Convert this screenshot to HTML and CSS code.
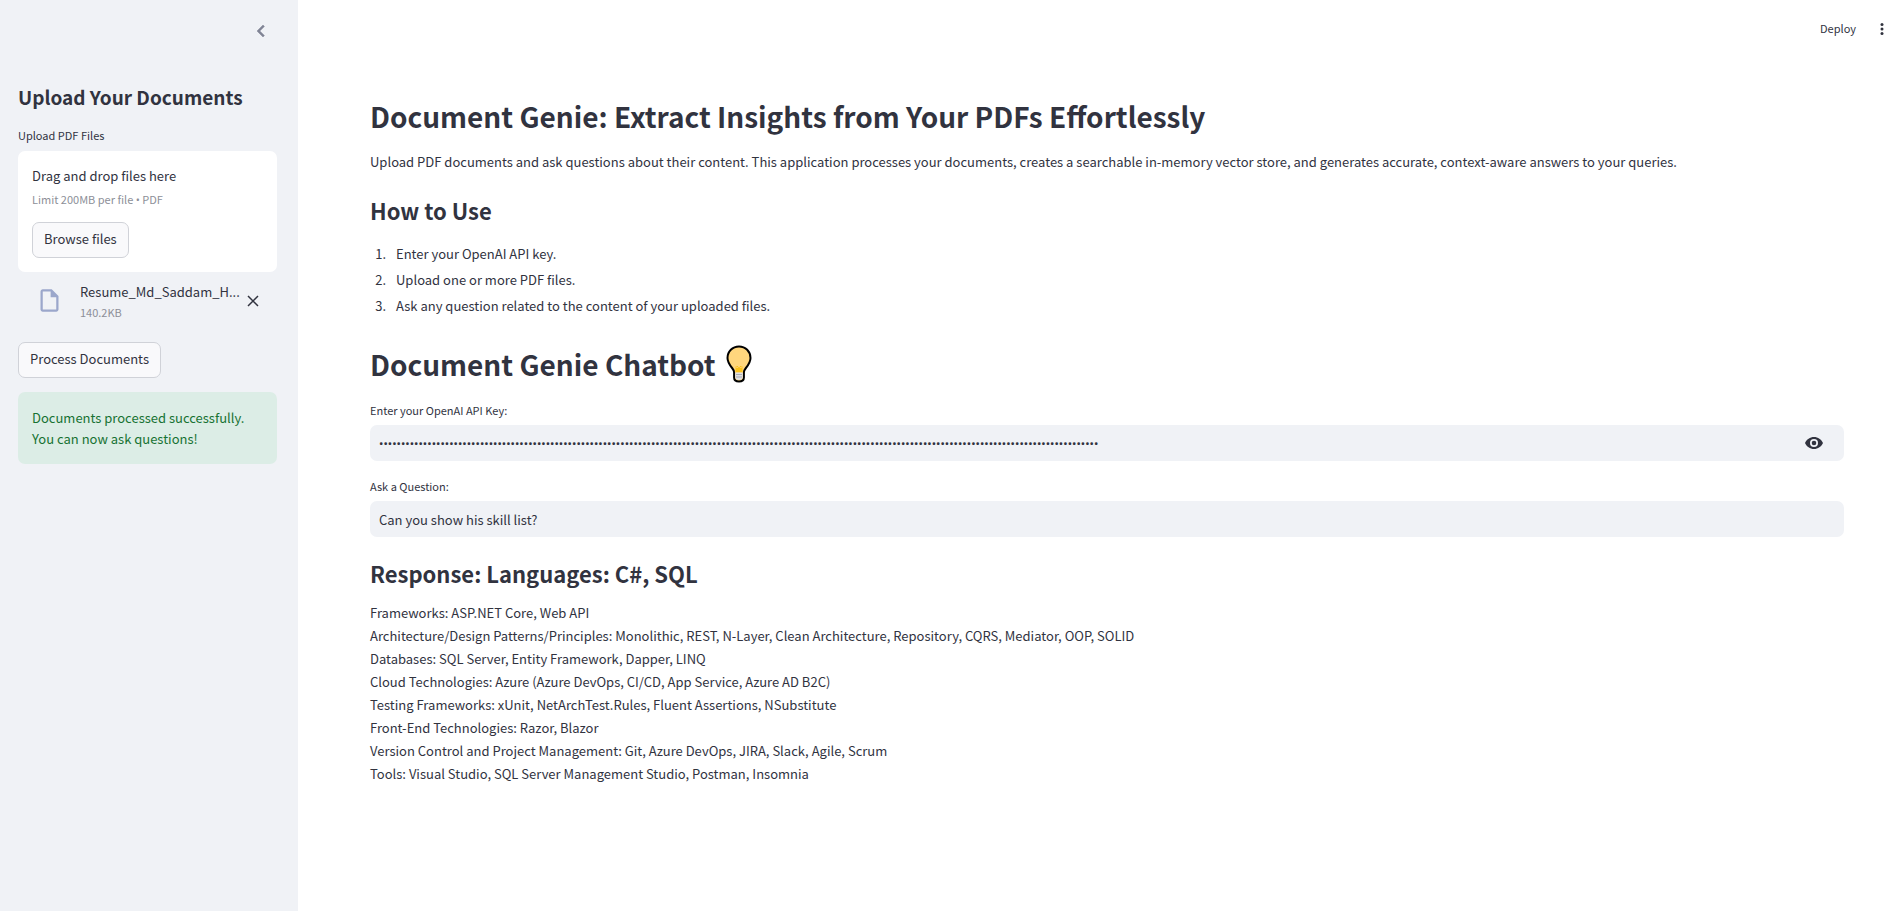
FILE: index.html
```html
<!DOCTYPE html>
<html lang="en">

<head>
    <meta charset="UTF-8">
    <title>Document Genie</title>
    <link rel="stylesheet" href="styles.css">
</head>

<body>
    <div class="app">
        <aside class="sidebar">
            <div class="sidebar-top">
                <button class="icon-button collapse" type="button" aria-label="Collapse sidebar">
                    <svg width="24" height="24" viewBox="0 0 24 24"><path d="M15.41 7.41L14 6l-6 6 6 6 1.41-1.41L10.83 12z" fill="currentColor" stroke="currentColor" stroke-width=".5"/></svg>
                </button>
            </div>
            <h2 class="sidebar-title">Upload Your Documents</h2>
            <label class="label" for="browse">Upload PDF Files</label>
            <div class="dropzone">
                <span class="drop-text">Drag and drop files here</span>
                <small class="hint">Limit 200MB per file <span class="bullet">•</span> PDF</small>
                <button class="button" id="browse" type="button">Browse files</button>
            </div>
            <div class="file">
                <svg class="file-icon" width="27" height="27" viewBox="0 0 24 24"><path d="M14 2H6c-1.100 0-1.990.9-1.990 2L4 20c0 1.100.89 2 1.990 2H18c1.100 0 2-.9 2-2V8l-6-6zM6 20V4h7v5h5v11H6z" fill="currentColor"/></svg>
                <div class="file-info">
                    <span class="file-name">Resume_Md_Saddam_H...</span>
                    <small class="hint">140.2KB</small>
                </div>
                <button class="icon-button" type="button" aria-label="Remove file">
                    <svg width="18" height="18" viewBox="0 0 18 18"><path d="M4 4l10 10M14 4L4 14" stroke="currentColor" stroke-width="1.500" fill="none"/></svg>
                </button>
            </div>
            <button class="button" type="button">Process Documents</button>
            <div class="alert" role="alert">Documents processed successfully. You can now ask questions!</div>
        </aside>

        <div class="page">
            <header class="toolbar">
                <button class="deploy" type="button">Deploy</button>
                <button class="icon-button" type="button" aria-label="Main menu">
                    <svg width="18" height="18" viewBox="0 0 18 18" fill="currentColor"><circle cx="9" cy="4.500" r="1.500"/><circle cx="9" cy="9" r="1.500"/><circle cx="9" cy="13.500" r="1.500"/></svg>
                </button>
            </header>

            <main class="content">
                <h1>Document Genie: Extract Insights from Your PDFs Effortlessly</h1>
                <p class="intro">Upload PDF documents and ask questions about their content. This application processes your documents, creates a searchable in-memory vector store, and generates accurate, context-aware answers to your queries.</p>
                <h2>How to Use</h2>
                <ol class="steps">
                    <li>Enter your OpenAI API key.</li>
                    <li>Upload one or more PDF files.</li>
                    <li>Ask any question related to the content of your uploaded files.</li>
                </ol>

                <h1 class="chat-title">Document Genie Chatbot
                    <svg class="bulb" width="26" height="38" viewBox="0 0 26 38" role="img" aria-label="Light bulb">
                        <path d="M13 1.500C6.500 1.500 1.500 6.500 1.500 13c0 4.300 2.400 7.300 4.600 10 1.300 1.600 2 2.700 2 4.500v5c0 2.400 2 4 4.900 4s4.900-1.600 4.900-4v-5c0-1.800.7-2.900 2-4.500 2.200-2.700 4.600-5.700 4.600-10C24.500 6.500 19.500 1.500 13 1.500z" fill="#ffd67d" stroke="#000" stroke-width="2"/>
                        <path d="M9.500 21h7v6.500h-7z" fill="#fcc21b"/>
                        <path d="M9.500 21l1.800 2 1.700-2 1.700 2 1.800-2" fill="none" stroke="#ffd67d"/>
                        <path d="M9.200 27.500h7.600V32c0 2-1.600 3-3.800 3s-3.800-1-3.800-3z" fill="#e0e0e2"/>
                        <path d="M10 29.500h6M10 32h6" stroke="#a9a9b0"/>
                    </svg>
                </h1>

                <label class="label" for="api-key">Enter your OpenAI API Key:</label>
                <div class="field">
                    <input class="secret" id="api-key" type="password" value="00000000000000000000000000000000000000000000000000000000000000000000000000000000000000000000000000000000000000000000000000000000000000000000000000000000000000000000">
                    <button class="icon-button" type="button" aria-label="Show password">
                        <svg width="18" height="18" viewBox="0 0 18 18"><path d="M9 3C5 3 1.600 5.500 0 9c1.600 3.500 5 6 9 6s7.400-2.500 9-6c-1.600-3.500-5-6-9-6zm0 10a4 4 0 110-8 4 4 0 010 8zm0-6.300a2.300 2.300 0 100 4.600 2.300 2.300 0 000-4.600z" fill="currentColor"/></svg>
                    </button>
                </div>

                <label class="label" for="question">Ask a Question:</label>
                <div class="field">
                    <input id="question" type="text" value="Can you show his skill list?">
                </div>

                <h2 class="response-title">Response: Languages: C#, SQL</h2>
                <p class="answer">
                    Frameworks: ASP.NET Core, Web API<br>
                    Architecture/Design Patterns/Principles: Monolithic, REST, N-Layer, Clean Architecture, Repository, CQRS, Mediator, OOP, SOLID<br>
                    Databases: SQL Server, Entity Framework, Dapper, LINQ<br>
                    Cloud Technologies: Azure (Azure DevOps, CI/CD, App Service, Azure AD B2C)<br>
                    Testing Frameworks: xUnit, NetArchTest.Rules, Fluent Assertions, NSubstitute<br>
                    Front-End Technologies: Razor, Blazor<br>
                    Version Control and Project Management: Git, Azure DevOps, JIRA, Slack, Agile, Scrum<br>
                    Tools: Visual Studio, SQL Server Management Studio, Postman, Insomnia
                </p>
            </main>
        </div>
    </div>
</body>

</html>
```
FILE: styles.css
```css
* {
  box-sizing: border-box;
}

body {
  margin: 0;
  font-family: "Noto Sans CJK SC", "Noto Sans", sans-serif;
  font-size: 13px;
  line-height: 23px;
  color: #31333f;
  background-color: #fff;
}

button,
input {
  font: inherit;
  color: inherit;
}

h1,
h2 {
  margin: 0;
  font-weight: 700;
}

h1 {
  font-size: 28px;
  line-height: 36px;
}

h2 {
  font-size: 22px;
  line-height: 28px;
}

.app {
  display: flex;
  min-height: 100vh;
}

/* sidebar */
.sidebar {
  width: 298px;
  flex-shrink: 0;
  padding: 18px 21px 18px 18px;
  background-color: #f0f2f6;
}

.sidebar-top {
  display: flex;
  justify-content: flex-end;
  height: 66px;
  padding-top: 4px;
}

.collapse {
  margin-right: 7px;
  color: #808495;
}

.icon-button {
  display: flex;
  align-items: center;
  justify-content: center;
  width: 18px;
  height: 18px;
  padding: 0;
  border: none;
  background: none;
}

.icon-button svg {
  flex-shrink: 0;
}

.sidebar-title {
  font-size: 19px;
  line-height: 26px;
  margin-bottom: 15px;
}

.label {
  display: block;
  font-size: 11px;
  line-height: 20px;
  margin-bottom: 6px;
}

.dropzone {
  display: flex;
  flex-direction: column;
  align-items: flex-start;
  padding: 13px 14px 14px;
  border-radius: 7px;
  background-color: #fff;
}

.hint {
  font-size: 11px;
  line-height: 20px;
  color: #8d8f98;
}

.bullet {
  font-family: "Open Sans", sans-serif;
}

.dropzone .hint {
  margin: 2px 0 12px;
}

.button {
  height: 36px;
  padding: 0 11px 3px;
  border: 1px solid #d0d2d8;
  border-radius: 7px;
  background-color: #f9f9fb;
}

.file {
  display: flex;
  align-items: center;
  padding: 8px 15px 21px 18px;
}

.file-icon {
  flex-shrink: 0;
  margin-right: 17px;
  color: #9ba7cb;
}

.file-info {
  flex: 1;
  display: flex;
  flex-direction: column;
  min-width: 0;
}

.file-info .hint {
  line-height: 18px;
}

.file-name {
  white-space: nowrap;
}

.alert {
  margin-top: 14px;
  padding: 15px 14px;
  border-radius: 7px;
  line-height: 21px;
  color: #177233;
  background-color: #dcede6;
}

/* main area */
.page {
  flex: 1;
  min-width: 0;
}

.toolbar {
  display: flex;
  justify-content: flex-end;
  align-items: center;
  gap: 17px;
  height: 58px;
  padding-right: 3px;
}

.deploy {
  padding: 0 0 2px;
  border: none;
  background: none;
  font-size: 11px;
}

.content {
  padding: 40px 50px 72px 72px;
}

.intro {
  margin: 16px 0 23px;
}

.steps {
  margin: 17px 0 26px;
  padding-left: 19px;
}

.steps li {
  line-height: 26px;
  padding-left: 7px;
}

.chat-title {
  display: flex;
  align-items: center;
  gap: 10px;
  margin-bottom: 17px;
}

.label + .field {
  margin-top: -1px;
}

.field {
  display: flex;
  align-items: center;
  height: 36px;
  margin-bottom: 15px;
  padding: 0 21px 0 9px;
  border-radius: 7px;
  background-color: #f0f2f6;
}

.field input {
  flex: 1;
  min-width: 0;
  padding: 0;
  border: none;
  outline: none;
  background: none;
}

.field .secret {
  font-family: Roboto, sans-serif;
}

.response-title {
  margin-top: 22px;
}

.answer {
  margin: 14px 0 0;
}
```
